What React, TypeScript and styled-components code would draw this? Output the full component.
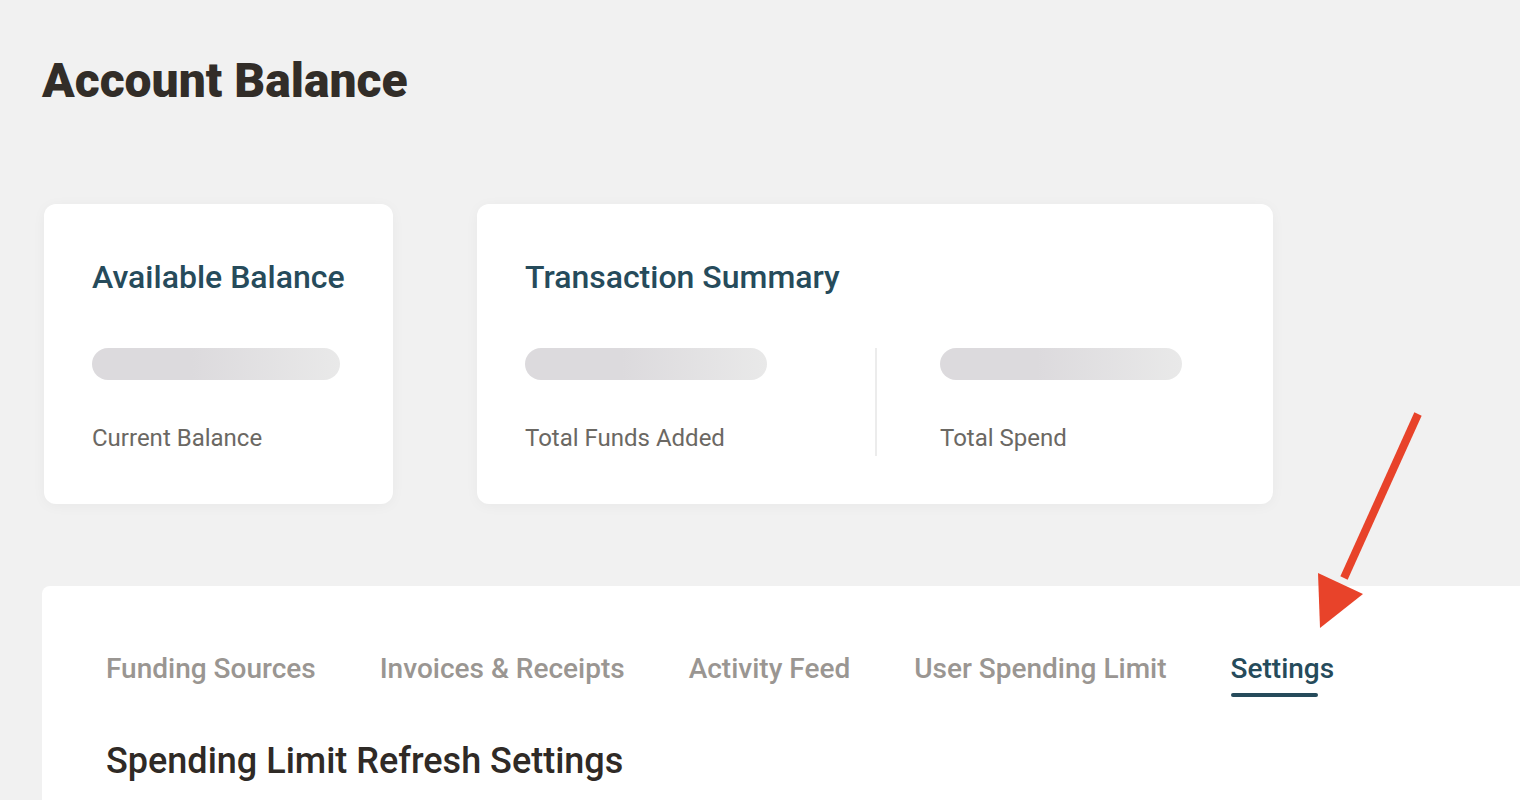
import React from "react";
import styled, { createGlobalStyle } from "styled-components";

const GlobalStyle = createGlobalStyle`
  html, body {
    margin: 0;
    padding: 0;
    background: #f1f1f1;
    font-family: Roboto, "Liberation Sans", sans-serif;
  }
`;

const Page = styled.div`
  position: relative;
  width: 1520px;
  height: 800px;
  overflow: hidden;
  padding-left: 42px;
  box-sizing: border-box;
`;

const PageTitle = styled.h1`
  margin: 0;
  padding-top: 53px;
  font-size: 48px;
  line-height: 56px;
  font-weight: 900;
  color: #322d28;
`;

const CardRow = styled.div`
  display: flex;
  gap: 84px;
  margin-top: 95px;
  padding-left: 2px;
`;

const Card = styled.div<{ $width: number }>`
  width: ${(p) => p.$width}px;
  height: 300px;
  box-sizing: border-box;
  background: #fff;
  border-radius: 12px;
  box-shadow: 0 2px 14px rgba(0, 0, 0, 0.04);
  padding: 55px 48px 0;
`;

const CardTitle = styled.h2`
  margin: 0;
  font-size: 32px;
  line-height: 36px;
  font-weight: 500;
  color: #264b5b;
`;

const StatGroup = styled.div`
  display: flex;
  margin-top: 53px;
`;

const Stat = styled.div<{ $divider?: boolean }>`
  flex: 0 0 auto;
  width: ${(p) => (p.$divider ? "350px" : "auto")};
  border-right: ${(p) => (p.$divider ? "2px solid #ececec" : "none")};
  height: 108px;
  margin-right: ${(p) => (p.$divider ? "63px" : "0")};
`;

const Skeleton = styled.div<{ $w: number }>`
  width: ${(p) => p.$w}px;
  height: 32px;
  border-radius: 16px;
  background: linear-gradient(90deg, #dcdadd 0%, #dcdadd 40%, #e9e9e9 100%);
`;

const StatLabel = styled.div`
  margin-top: 44px;
  font-size: 24px;
  line-height: 28px;
  color: #6b6863;
`;

const Panel = styled.div`
  margin-top: 82px;
  background: #fff;
  border-radius: 8px 0 0 0;
  height: 300px;
  padding: 53px 0 0 64px;
  box-sizing: border-box;
`;

const Tabs = styled.div`
  display: flex;
  gap: 64px;
`;

const Tab = styled.div<{ $active?: boolean }>`
  position: relative;
  font-size: 28px;
  line-height: 60px;
  font-weight: 500;
  color: ${(p) => (p.$active ? "#264b5b" : "#9a9692")};

  &::after {
    content: "";
    display: ${(p) => (p.$active ? "block" : "none")};
    position: absolute;
    left: 0;
    bottom: 2px;
    width: 87px;
    height: 4px;
    border-radius: 2px;
    background: #264b5b;
  }
`;

const SectionTitle = styled.h3`
  margin: 40px 0 0;
  font-size: 36px;
  line-height: 44px;
  font-weight: 500;
  color: #2f2a26;
`;

const Arrow = styled.svg`
  position: absolute;
  left: 0;
  top: 0;
  pointer-events: none;
`;

export default function App() {
  return (
    <>
      <GlobalStyle />
      <Page>
        <PageTitle>Account Balance</PageTitle>
        <CardRow>
          <Card $width={349}>
            <CardTitle>Available Balance</CardTitle>
            <StatGroup>
              <Stat>
                <Skeleton $w={248} />
                <StatLabel>Current Balance</StatLabel>
              </Stat>
            </StatGroup>
          </Card>
          <Card $width={796}>
            <CardTitle>Transaction Summary</CardTitle>
            <StatGroup>
              <Stat $divider>
                <Skeleton $w={242} />
                <StatLabel>Total Funds Added</StatLabel>
              </Stat>
              <Stat>
                <Skeleton $w={242} />
                <StatLabel>Total Spend</StatLabel>
              </Stat>
            </StatGroup>
          </Card>
        </CardRow>
        <Panel>
          <Tabs>
            <Tab>Funding Sources</Tab>
            <Tab>Invoices &amp; Receipts</Tab>
            <Tab>Activity Feed</Tab>
            <Tab>User Spending Limit</Tab>
            <Tab $active>Settings</Tab>
          </Tabs>
          <SectionTitle>Spending Limit Refresh Settings</SectionTitle>
        </Panel>
        <Arrow width="1520" height="800" viewBox="0 0 1520 800">
          <line x1="1418" y1="414" x2="1344" y2="578" stroke="#e8432a" strokeWidth="8" />
          <polygon points="1318,573 1363,594 1320,628" fill="#e8432a" />
        </Arrow>
      </Page>
    </>
  );
}
